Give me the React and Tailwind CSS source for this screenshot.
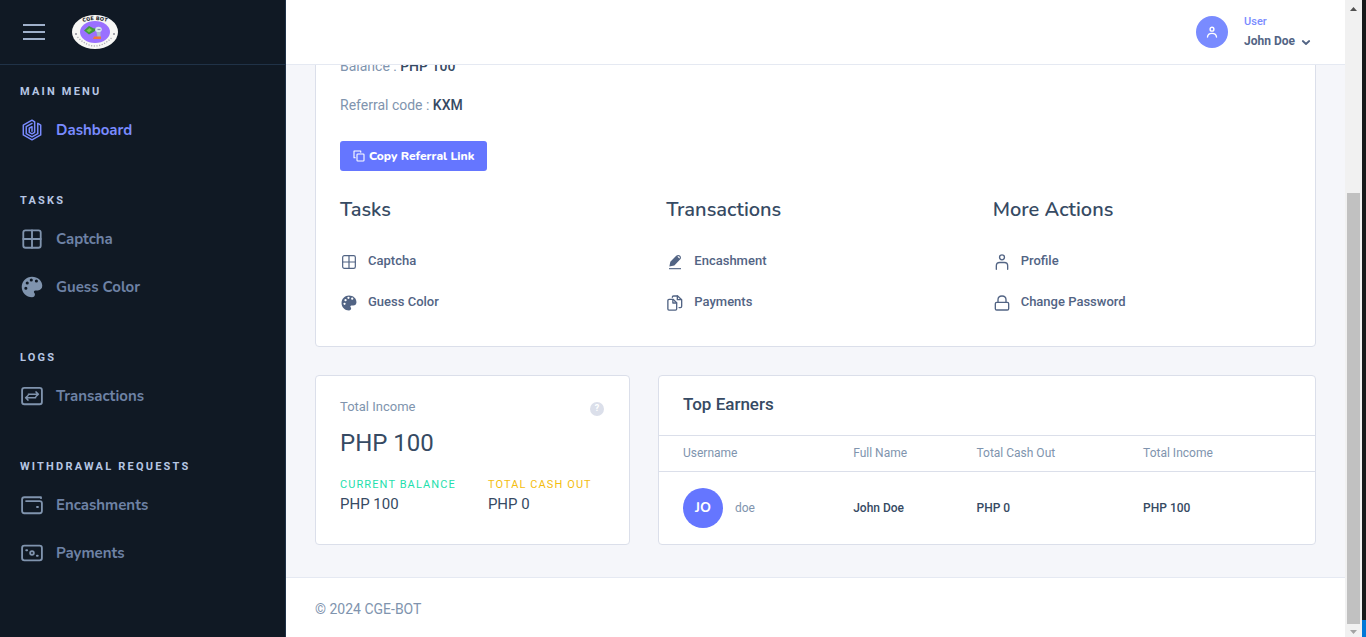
import React from "react";

const stroke = {
  fill: "none",
  stroke: "currentColor",
  strokeLinecap: "round",
  strokeLinejoin: "round",
};

function Icon({ className, children, ...rest }) {
  return (
    <svg viewBox="0 0 24 24" className={className} aria-hidden="true" {...rest}>
      {children}
    </svg>
  );
}

function HexSpiral({ className }) {
  return (
    <Icon className={className} {...stroke} strokeWidth="1.6">
      <path d="M14.500 2.800 12 1.300 2.500 6.600v10.800L12 22.700l9.500-5.300V6.600L18.300 4.800" />
      <path d="M18.300 4.800v11.200L12 19.500 5.700 16V8.300L12 4.800" />
      <path d="M14.900 2.900v11.600L12 16.200 9 14.500v-4.400l3-1.700v5" />
    </Icon>
  );
}

function GridIcon({ className, weight = 2 }) {
  return (
    <Icon className={className} {...stroke} strokeWidth={weight}>
      <rect x="2.500" y="2.500" width="19" height="19" rx="2.500" />
      <path d="M12 2.500v19M2.500 12h19" />
    </Icon>
  );
}

function PaletteIcon({ className }) {
  return (
    <Icon className={className} fill="currentColor">
      <path
        fillRule="evenodd"
        d="M12 .8C5.800.8.8 5.800.8 12S5.800 23.200 12 23.200c2 0 3.200-1.300 3.200-2.900 0-.8-.3-1.400-.8-2-.8-1-.1-2.600 1.300-2.600h2.600c2.800 0 4.900-2 4.900-5C23.200 5 18.200.8 12 .8ZM5.300 15a1.700 1.700 0 1 0 0-3.400 1.700 1.700 0 0 0 0 3.400Zm1.500-5.600a1.700 1.700 0 1 0 0-3.400 1.700 1.700 0 0 0 0 3.400ZM11.200 6a1.700 1.700 0 1 0 0-3.400 1.700 1.700 0 0 0 0 3.400Zm5.600 1.200a1.700 1.700 0 1 0 0-3.400 1.700 1.700 0 0 0 0 3.400Z"
      />
    </Icon>
  );
}

function TransferIcon({ className }) {
  return (
    <Icon className={className} {...stroke} strokeWidth="2">
      <rect x="1.200" y="3.200" width="21.600" height="17.800" rx="2.500" />
      <path d="M8 10h11M16.300 7.500 19 10l-2.700 2.500M16 14H5M7.700 11.500 5 14l2.700 2.500" strokeWidth="1.600" />
    </Icon>
  );
}

function WalletIcon({ className }) {
  return (
    <Icon className={className} {...stroke} strokeWidth="2">
      <path d="M21.800 4.500v-1H3.700c-1.400 0-2.500 1-2.500 2.400v12.700c0 1.400 1 2.400 2.400 2.400h16.800c1.400 0 2.400-1 2.400-2.400V10c0-1.400-1-2.300-2.400-2.300H5.500" />
      <path d="M17.500 14.300h1" strokeWidth="2.200" />
    </Icon>
  );
}

function CashIcon({ className }) {
  return (
    <Icon className={className} {...stroke} strokeWidth="2">
      <rect x="1.200" y="4" width="21.600" height="16" rx="2.500" />
      <circle cx="12" cy="12" r="2" />
      <path d="M5.700 9h1M17.300 15h1" strokeWidth="2" />
    </Icon>
  );
}

function PenIcon({ className }) {
  return (
    <Icon className={className}>
      <path
        fill="currentColor"
        fillRule="evenodd"
        d="M3.500 18.700 5 11.800 13.800 2.800c1.800-1.800 4.400-1.800 6-.2 1.600 1.600 1.600 4-.2 5.800L11 17.200l-7.500 1.500ZM15.700 4l2.900 2.900c.8-.9.9-2 .1-2.800-.8-.8-2.100-.9-3-.1Z"
      />
      <path d="M3 22h18" stroke="currentColor" strokeWidth="1.700" />
    </Icon>
  );
}

function FilesIcon({ className }) {
  return (
    <Icon className={className} {...stroke} strokeWidth="2">
      <path d="M8 3.500c0-1.200.7-2 1.900-2H16l6 5.500v10c0 1.200-.7 1.900-1.900 1.900h-2" />
      <path d="M3 6.500h6l5.500 5.200v9.300c0 1-.7 1.700-1.700 1.700H3c-1 0-1.700-.7-1.700-1.700V8.200c0-1 .7-1.700 1.700-1.700Z" />
      <path d="M8.800 6.500v5.500h5.500M15.500 1.500V7H21" />
    </Icon>
  );
}

function PersonIcon({ className }) {
  return (
    <Icon className={className} {...stroke} strokeWidth="2">
      <circle cx="12" cy="5" r="3.700" />
      <path d="M3.500 23v-5.500c0-3 2-4.700 5-4.700h7c3 0 5 1.700 5 4.700V23" />
    </Icon>
  );
}

function LockIcon({ className }) {
  return (
    <Icon className={className} {...stroke} strokeWidth="2">
      <rect x="2" y="11" width="20" height="11.500" rx="2" />
      <path d="M6 11V7.300c0-3.500 2.500-5.800 6-5.800s6 2.300 6 5.800V11" />
    </Icon>
  );
}

function CopyIcon({ className }) {
  return (
    <Icon className={className} {...stroke} strokeWidth="2.200">
      <rect x="8" y="8" width="14" height="14" rx="1.500" />
      <path d="M4.500 15.500H2V2h13.500v2.500" />
    </Icon>
  );
}

function Logo() {
  return (
    <svg viewBox="0 0 46 34" className="h-[34px] w-[46px]" role="img" aria-label="CGE BOT">
      <ellipse cx="23" cy="17" rx="23" ry="17" fill="#f7f7f5" />
      <ellipse cx="23" cy="17" rx="15" ry="11" fill="#9a70ff" />
      <defs>
        <path id="logo-top" d="M8 8.200Q23 1.800 38 8.200" />
      </defs>
      <text fontSize="5" fontWeight="700" fontFamily="DejaVu Sans, sans-serif" fill="#16181d" textAnchor="middle">
        <textPath href="#logo-top" startOffset="50%">CGE BOT</textPath>
      </text>
      <path d="M5.500 22Q23 40 40.500 22" fill="none" stroke="#a9a9b0" strokeWidth="1.300" strokeDasharray="1.200 1.500" />
      <rect x="3" y="18" width="2" height="2" fill="#a5a5ad" />
      <rect x="41" y="18" width="2" height="2" fill="#a5a5ad" />
      <path d="M12 15.500 17 11l5 2.500 3-.5-2 3-6 3.500Z" fill="#3f9a3c" />
      <path d="m14.500 15.500 3-2.500 2.500 2-3 2.500Z" fill="#7cc94f" />
      <ellipse cx="26.500" cy="14.500" rx="3.300" ry="2.800" fill="#d5e3ee" />
      <path d="M24.500 17h4v5h-3Z" fill="#a9bccb" />
      <path d="M25.500 14.500h3" stroke="#7f93a6" strokeWidth="1.200" />
      <path d="M22 21.500h7v2.500h-8Z" fill="#ef7a3c" />
    </svg>
  );
}

const menu = [
  { title: "Main Menu", items: [{ label: "Dashboard", icon: HexSpiral, active: true }] },
  {
    title: "Tasks",
    items: [
      { label: "Captcha", icon: GridIcon },
      { label: "Guess Color", icon: PaletteIcon },
    ],
  },
  { title: "Logs", items: [{ label: "Transactions", icon: TransferIcon }] },
  {
    title: "Withdrawal Requests",
    items: [
      { label: "Encashments", icon: WalletIcon },
      { label: "Payments", icon: CashIcon },
    ],
  },
];

function Sidebar() {
  return (
    <aside className="flex w-[286px] shrink-0 flex-col border-r border-[#203247] bg-[#101924]">
      <div className="flex h-[65px] shrink-0 items-center gap-[26px] border-b border-[#203247] pl-[22px]">
        <button type="button" aria-label="Toggle menu" className="text-[#9fb0ca]">
          <svg viewBox="0 0 24 24" className="size-6" fill="none" stroke="currentColor" strokeWidth="2">
            <path d="M1 5h22M1 12h22M1 19h22" />
          </svg>
        </button>
        <a href="#home">
          <Logo />
        </a>
      </div>
      <nav className="flex flex-col gap-[39px] pt-[19px]">
        {menu.map((section) => (
          <section key={section.title}>
            <h2 className="pb-[6px] pl-5 text-[11px] leading-4 font-bold tracking-[2.2px] text-[#b6c6e3] uppercase">
              {section.title}
            </h2>
            <ul>
              {section.items.map(({ label, icon: Glyph, active }) => (
                <li key={label}>
                  <a
                    href="#menu"
                    className={`flex h-12 items-center gap-3 pl-5 font-['Nunito','Noto_Sans',sans-serif] text-[15px] font-bold ${
                      active ? "text-[#798bff]" : "text-[#6e82a5]"
                    }`}
                  >
                    <span className={`flex w-6 justify-center ${active ? "text-[#798bff]" : "text-[#8094ae]"}`}>
                      <Glyph className="size-[22px]" />
                    </span>
                    {label}
                  </a>
                </li>
              ))}
            </ul>
          </section>
        ))}
      </nav>
    </aside>
  );
}

function Header() {
  return (
    <header className="flex h-[65px] shrink-0 items-center justify-end border-b border-[#e5e9f2] bg-white pr-[34px]">
      <button type="button" className="flex items-center gap-4 text-left">
        <span className="flex size-8 items-center justify-center rounded-full bg-[#798bff] text-white">
          <svg viewBox="0 0 12 12" className="size-3" {...stroke} strokeWidth="1.400">
            <circle cx="6" cy="3.200" r="1.900" />
            <path d="M1.500 11c.2-2.500 1.800-3.600 4.500-3.600s4.300 1.100 4.500 3.600" />
          </svg>
        </span>
        <span className="flex flex-col pb-px">
          <span className="text-[11px] leading-5 font-medium text-[#798bff]">User</span>
          <span className="flex items-center gap-[6px] text-xs leading-[19px] font-bold text-[#526484]">
            John Doe
            <svg viewBox="0 0 10 10" className="size-[10px]" {...stroke} strokeWidth="1.800">
              <path d="m1.800 4 3.200 3 3.200-3" />
            </svg>
          </span>
        </span>
      </button>
    </header>
  );
}

const actions = [
  {
    title: "Tasks",
    links: [
      { label: "Captcha", icon: GridIcon },
      { label: "Guess Color", icon: PaletteIcon },
    ],
  },
  {
    title: "Transactions",
    links: [
      { label: "Encashment", icon: PenIcon },
      { label: "Payments", icon: FilesIcon },
    ],
  },
  {
    title: "More Actions",
    links: [
      { label: "Profile", icon: PersonIcon },
      { label: "Change Password", icon: LockIcon },
    ],
  },
];

const card = "rounded border border-[#dbdfea] bg-white";

function AccountCard() {
  return (
    <section className={`${card} px-6 pt-6 pb-[23px]`}>
      <p className="text-sm leading-6 text-[#8094ae]">
        Balance : <span className="font-medium text-[#364a63]">PHP 100</span>
      </p>
      <p className="mt-[15px] text-sm leading-6 text-[#8094ae]">
        Referral code : <span className="font-medium text-[#364a63]">KXM</span>
      </p>
      <button
        type="button"
        className="mt-6 flex h-[30px] items-center gap-1 rounded-[3px] bg-[#6576ff] px-[13px] font-['Nunito','Noto_Sans',sans-serif] text-xs font-extrabold text-white"
      >
        <CopyIcon className="size-3" />
        Copy Referral Link
      </button>
      <div className="mt-[27px] grid grid-cols-3 gap-7">
        {actions.map((group) => (
          <div key={group.title}>
            <h3 className="font-['Nunito','Noto_Sans',sans-serif] text-xl leading-6 font-semibold text-[#364a63]">
              {group.title}
            </h3>
            <ul className="mt-[19px]">
              {group.links.map(({ label, icon: Glyph }) => (
                <li key={label}>
                  <a href="#action" className="flex h-[41px] items-center text-[13px] font-medium text-[#526484]">
                    <span className="flex w-7 pt-px pl-px">
                      <Glyph className="size-4" weight={1.8} />
                    </span>
                    {label}
                  </a>
                </li>
              ))}
            </ul>
          </div>
        ))}
      </div>
    </section>
  );
}

function IncomeCard() {
  return (
    <section className={`${card} px-6 pt-[21px]`}>
      <div className="flex items-center justify-between pr-px">
        <h3 className="text-[13px] leading-5 text-[#8094ae]">Total Income</h3>
        <button
          type="button"
          aria-label="Total income help"
          className="mt-1 flex size-[14px] items-center justify-center rounded-full bg-[#dbdfea] text-[9px] font-bold text-white"
        >
          ?
        </button>
      </div>
      <p className="mt-[10px] text-2xl leading-8 text-[#364a63]">PHP 100</p>
      <dl className="mt-4 flex gap-8">
        <div>
          <dt className="text-[11px] leading-5 tracking-[1.1px] text-[#1ee0ac] uppercase">Current Balance</dt>
          <dd className="text-[15px] leading-[19px] text-[#364a63]">PHP 100</dd>
        </div>
        <div>
          <dt className="text-[11px] leading-5 tracking-[1.1px] text-[#f4bd0e] uppercase">Total Cash Out</dt>
          <dd className="text-[15px] leading-[19px] text-[#364a63]">PHP 0</dd>
        </div>
      </dl>
    </section>
  );
}

function EarnersCard() {
  return (
    <section className={`${card} col-span-2`}>
      <h3 className="px-6 pt-4 pb-[19px] text-[17px] leading-6 font-medium text-[#364a63]">Top Earners</h3>
      <table className="w-full table-fixed border-collapse text-left text-xs">
        <thead>
          <tr className="h-9 border-y border-[#dbdfea] text-[#8094ae]">
            <th className="w-[29.600%] pl-6 font-normal">Username</th>
            <th className="w-[18.800%] font-normal">Full Name</th>
            <th className="w-[25.400%] font-normal">Total Cash Out</th>
            <th className="font-normal">Total Income</th>
          </tr>
        </thead>
        <tbody>
          <tr className="h-[73px] font-medium text-[#364a63]">
            <td className="pl-6">
              <div className="flex items-center gap-3 font-normal text-[#8094ae]">
                <span className="flex size-10 items-center justify-center rounded-full bg-[#6576ff] font-['Nunito','Noto_Sans',sans-serif] text-sm font-bold text-white">
                  JO
                </span>
                doe
              </div>
            </td>
            <td>John Doe</td>
            <td>PHP 0</td>
            <td>PHP 100</td>
          </tr>
        </tbody>
      </table>
    </section>
  );
}

function ScrollRail() {
  return (
    <div className="flex w-[17px] shrink-0 flex-col items-center bg-[#f1f1f1]" aria-hidden="true">
      <svg viewBox="0 0 17 17" className="size-[17px]">
        <path d="M5 11h7L8.500 7Z" fill="#505050" />
      </svg>
      <div className="grow-[176]" />
      <div className="w-[13px] grow-[431] bg-[#c1c1c1]" />
      <svg viewBox="0 0 17 13" className="h-[13px] w-[17px]">
        <path d="M5 6h7L8.500 10Z" fill="#a3a3a3" />
      </svg>
    </div>
  );
}

export default function App() {
  return (
    <div className="flex h-screen overflow-hidden bg-[#f5f6fa] font-['Roboto',sans-serif]">
      <Sidebar />
      <div className="flex min-w-0 flex-1 flex-col">
        <Header />
        <div className="flex min-h-0 flex-1 flex-col justify-end overflow-hidden">
          <main className="flex flex-col gap-7 px-[29px] pb-8">
            <AccountCard />
            <div className="grid grid-cols-3 gap-7">
              <IncomeCard />
              <EarnersCard />
            </div>
          </main>
          <footer className="flex h-[60px] shrink-0 items-center border-t border-[#e5e9f2] bg-white px-[29px] pt-[2px] text-sm text-[#8094ae]">
            © 2024 CGE-BOT
          </footer>
        </div>
      </div>
      <ScrollRail />
      <div className="flex w-1 shrink-0 flex-col bg-[#17191a]" aria-hidden="true">
        <div className="mt-auto h-[17px] bg-[#0078d7]" />
      </div>
    </div>
  );
}
